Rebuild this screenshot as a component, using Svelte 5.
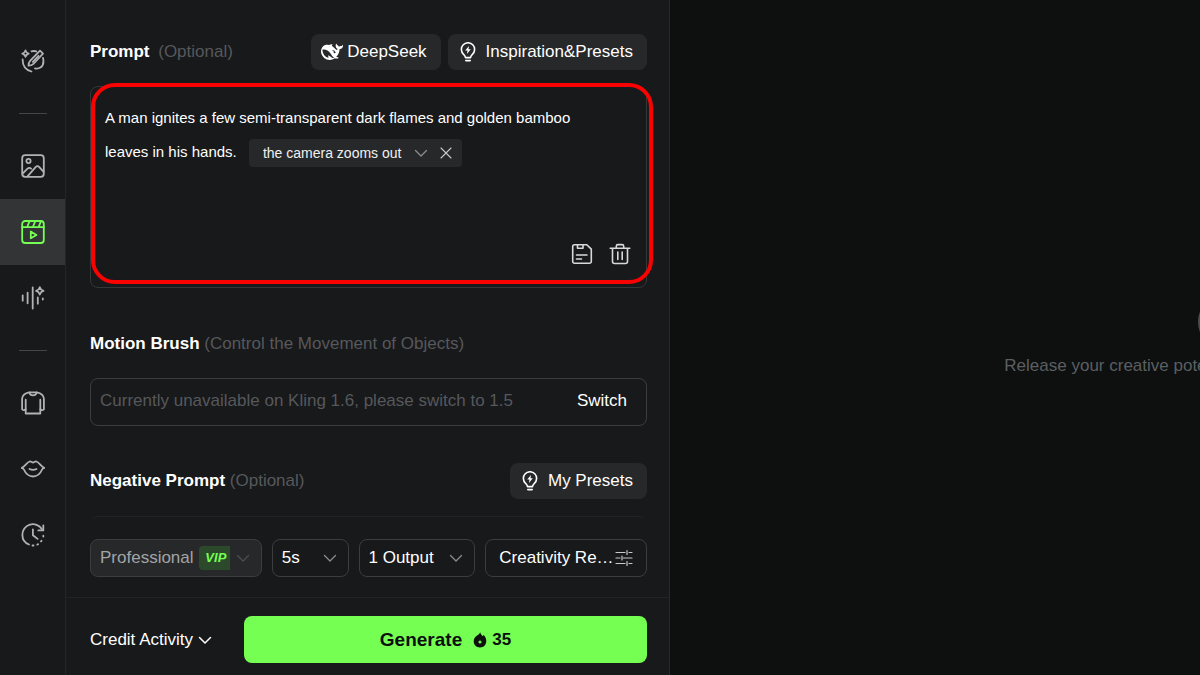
<script lang="ts">
	let prompt = $state(
		'A man ignites a few semi-transparent dark flames and golden bamboo leaves in his hands.'
	);
	let camera = $state('the camera zooms out');
	let showCamera = $state(true);
	let negative = $state('');
	let active = $state('video');

	const groups = [
		[{ id: 'design', label: 'Design' }],
		[
			{ id: 'image', label: 'Image' },
			{ id: 'video', label: 'Video' },
			{ id: 'audio', label: 'Audio' }
		],
		[
			{ id: 'tryon', label: 'Virtual try-on' },
			{ id: 'lips', label: 'Lip sync' },
			{ id: 'history', label: 'History' }
		]
	];

	function clearPrompt() {
		prompt = '';
		showCamera = false;
	}
</script>

{#snippet chevron()}
	<svg class="chevron" viewBox="0 0 14 14" width="14" height="14" aria-hidden="true">
		<path d="M1.500 4.500 7 10l5.500-5.500" />
	</svg>
{/snippet}

{#snippet bulb()}
	<svg class="icon" viewBox="0 0 20 20" width="20" height="20" aria-hidden="true">
		<path d="M7.400 15.600c0-1.400-.8-2.400-1.800-3.300a6.600 6.600 0 1 1 8.800 0c-1 .9-1.800 1.900-1.800 3.300z" />
		<path d="M7.800 18.600h4.400" />
		<path d="M11 3.900 7.200 8.400h2.300l-.6 3.600 3.900-4.700h-2.300z" fill="currentColor" stroke="none" />
	</svg>
{/snippet}

<div class="app">
	<nav class="rail" aria-label="Tools">
		{#each groups as group, g}
			{#if g > 0}<hr />{/if}
			{#each group as item}
				<button
					class="rail-item"
					class:active={active === item.id}
					aria-label={item.label}
					onclick={() => (active = item.id)}
				>
					<svg class="icon" viewBox="0 0 24 24" width="24" height="24" aria-hidden="true">
						{#if item.id === 'design'}
							<path d="M4.500 1.400c.5 2 1.200 2.700 3.200 3.200-2 .5-2.700 1.200-3.200 3.200-.5-2-1.200-2.700-3.200-3.200 2-.5 2.700-1.200 3.200-3.200z" />
							<path d="M1.600 10.500c0 6 3.300 10.600 8.900 12" />
							<path d="M10.500 2.300c1.700-.4 3.300-.4 4.800.1" />
							<path d="m19 1.600 3 3-9.600 10.200c-1.300 1.300-2.800 1.800-4.900 1.900 0-2.200.5-3.700 1.800-5.100z" />
							<path d="m11.800 12.800 5.700-6" />
							<path d="M22 8.800c.9 4-.1 8.200-2.600 9.800-1.600 1-3.400 1.200-5.400.8" />
						{:else if item.id === 'image'}
							<rect x="1.200" y="1.200" width="21.600" height="21.600" rx="3" />
							<circle cx="7.500" cy="7" r="2.100" />
							<path d="m1.600 19.700 4.900-5c1.200-1.200 2.500-1.200 3.600 0M6.500 22.300l8.100-9.200c1.200-1.300 2.500-1.300 3.700 0l4.300 4.700" />
						{:else if item.id === 'video'}
							<rect x="1.200" y="1" width="21.600" height="22" rx="3" />
							<path d="M1.200 7.200h21.600M8.600 1.200 6.200 7M14.300 1.200 11.900 7M20 1.200 17.600 7" />
							<path d="M9.800 11.500v6.800l5.700-3.400z" />
						{:else if item.id === 'audio'}
							<path d="M1.700 9.300v5.400M6.600 6.700v10.600M11.700 1.500v21M16.800 11.500v6.200M21.800 12.500v1" />
							<path d="M18.800 1.200c.6 2.200 1.500 3.100 3.700 3.700-2.200.6-3.100 1.500-3.700 3.700-.6-2.200-1.500-3.100-3.700-3.700 2.200-.6 3.100-1.500 3.700-3.700z" />
						{:else if item.id === 'tryon'}
							<path d="M8.100 1.300h7.800c3.900.7 6.700 2.800 7 6.500v10.500c-1 .9-2.500.9-3.600 0v4.200H4.700v-4.200c-1.100.9-2.600.9-3.600 0V7.800c.3-3.700 3.100-5.800 7-6.500z" />
							<path d="M4.700 18.300V8.700M19.300 18.300V8.700M8.200 1.500c.6 1.900 2 2.900 3.800 2.900s3.200-1 3.800-2.900" />
						{:else if item.id === 'lips'}
							<path d="M.9 10.800C4.300 9.300 5.900 5.200 8.700 4.500c1.400-.3 2.200 1 3.300 1s1.900-1.300 3.300-1c2.800.7 4.400 4.800 7.800 6.300" />
							<path d="M.9 10.800c1 .2 1.600.8 2 1.700 1.900 4.400 5.100 7 9.100 7s7.200-2.600 9.100-7c.4-.9 1-1.500 2-1.700" />
							<path d="M8.500 12c2.200 1 4.800 1 7 0" />
						{:else}
							<path d="M8 21.500C4 20 1.400 16.500 1.400 12A10.500 10.500 0 0 1 20.800 6.100" />
							<path d="M22.300 2.400v5h-5" />
							<path d="M11.900 6.500v5.700l4.700 3.700" />
							<path d="M11.500 22.500h1M16.300 21.600l.8-.4M20 18.400l.5-.7M22.300 13.500v-.8" />
						{/if}
					</svg>
				</button>
			{/each}
		{/each}
	</nav>

	<main class="panel">
		<div class="scroll">
			<section>
				<header class="head">
					<h2>Prompt <small class="wide">(Optional)</small></h2>
					<div class="actions">
						<button class="pill tight">
							<svg viewBox="0 3 24 18" width="22" height="18" aria-hidden="true">
								<path
									fill="currentColor"
									d="M23.748 4.482c-.254-.124-.364.113-.512.234-.051.039-.094.09-.137.136-.372.397-.806.657-1.373.626-.829-.046-1.537.214-2.163.848-.133-.782-.575-1.248-1.247-1.548-.352-.156-.708-.311-.955-.65-.172-.241-.219-.51-.305-.774-.055-.16-.11-.323-.293-.35-.2-.031-.278.136-.356.276-.313.572-.434 1.202-.422 1.840.027 1.436.633 2.580 1.838 3.393.137.093.172.187.129.323-.082.280-.180.552-.266.833-.055.179-.137.217-.329.140a5.526 5.526 0 0 1-1.736-1.180c-.857-.828-1.631-1.742-2.597-2.458a11.365 11.365 0 0 0-.689-.471c-.985-.957.130-1.743.388-1.836.270-.098.093-.432-.779-.428-.872.004-1.670.295-2.687.684a3.055 3.055 0 0 1-.465.137 9.597 9.597 0 0 0-2.883-.102c-1.885.210-3.390 1.102-4.497 2.623C.082 8.606-.231 10.684.152 12.850c.403 2.284 1.569 4.175 3.360 5.653 1.858 1.533 3.997 2.284 6.438 2.140 1.482-.085 3.133-.284 4.994-1.860.470.234.962.327 1.780.397.630.059 1.236-.030 1.705-.128.735-.156.684-.837.419-.961-2.155-1.004-1.682-.595-2.113-.926 1.096-1.296 2.746-2.642 3.392-7.003.050-.347.007-.565 0-.845-.004-.170.035-.237.230-.256a4.173 4.173 0 0 0 1.545-.475c1.396-.763 1.960-2.015 2.093-3.517.020-.230-.004-.467-.247-.588zM11.581 18c-2.089-1.642-3.102-2.183-3.520-2.160-.392.024-.321.471-.235.763.090.288.207.486.371.739.114.167.192.416-.113.603-.673.416-1.842-.140-1.897-.167-1.361-.802-2.500-1.860-3.301-3.307-.774-1.393-1.224-2.887-1.298-4.482-.020-.386.093-.522.477-.592a4.696 4.696 0 0 1 1.529-.039c2.132.312 3.946 1.265 5.468 2.774.868.860 1.525 1.887 2.202 2.891.720 1.066 1.494 2.082 2.480 2.914.348.292.625.514.891.677-.802.090-2.140.110-3.054-.614zm4.110-4.844c-.200.081-.399.151-.590.160a1.245 1.245 0 0 1-.798-.254c-.274-.230-.470-.358-.552-.758a1.730 1.730 0 0 1 .016-.588c.070-.327-.008-.537-.239-.727-.187-.156-.426-.199-.688-.199a.559.559 0 0 1-.254-.078.253.253 0 0 1-.114-.358c.028-.054.160-.186.192-.210.356-.202.767-.136 1.146.016.352.144.618.408 1.001.782.391.451.462.576.685.914.176.265.336.537.445.848.067.195-.019.354-.250.452z"
								/>
							</svg>
							DeepSeek
						</button>
						<button class="pill">{@render bulb()} Inspiration&amp;Presets</button>
					</div>
				</header>

				<div class="prompt-box">
					<div class="prompt-text">
						<span role="textbox" tabindex="0" aria-label="Prompt" contenteditable="true" bind:textContent={prompt}></span>
						{#if showCamera}
							<span class="chip">
								<select aria-label="Camera movement" bind:value={camera}>
									<option>the camera zooms out</option>
								</select>
								{@render chevron()}
								<button aria-label="Remove camera movement" onclick={() => (showCamera = false)}>
									<svg class="icon" viewBox="0 0 12 12" width="12" height="12" aria-hidden="true">
										<path d="m1 1 10 10M11 1 1 11" />
									</svg>
								</button>
							</span>
						{/if}
					</div>
					<div class="tools">
						<button aria-label="Save prompt">
							<svg class="icon" viewBox="0 0 22 22" width="22" height="22" aria-hidden="true">
								<path d="M3.500 1.700h12.300l4.500 4.400v12.400a1.800 1.800 0 0 1-1.800 1.800h-15a1.800 1.800 0 0 1-1.800-1.800v-15a1.800 1.800 0 0 1 1.800-1.800z" />
								<path d="M6.500 1.700v3.500H12V1.700M5.500 12H16M5.500 16h5" />
							</svg>
						</button>
						<button aria-label="Clear prompt" onclick={clearPrompt}>
							<svg class="icon" viewBox="0 0 22 22" width="22" height="22" aria-hidden="true">
								<path d="M1.200 5.300h19.600M7.300 5V3.200c0-1 .6-1.600 1.600-1.600h4.200c1 0 1.600.6 1.600 1.600V5M3.500 5.500v13a2 2 0 0 0 2 2h11a2 2 0 0 0 2-2v-13" />
								<path d="M8.800 9v7.500M13.200 9v7.500" />
							</svg>
						</button>
					</div>
					<div class="highlight"></div>
				</div>
			</section>

			<section class="motion">
				<h2>Motion Brush <small>(Control the Movement of Objects)</small></h2>
				<div class="notice">
					<span>Currently unavailable on Kling 1.6, please switch to 1.5</span>
					<button>Switch</button>
				</div>
			</section>

			<section class="negative">
				<header class="head">
					<h2><label for="negative">Negative Prompt</label> <small>(Optional)</small></h2>
					<button class="pill">{@render bulb()} My Presets</button>
				</header>
				<textarea id="negative" bind:value={negative}></textarea>
			</section>
		</div>

		<div class="params">
			<div class="field disabled">
				<select aria-label="Mode" disabled><option>Professional</option></select>
				<span class="vip">VIP</span>
				{@render chevron()}
			</div>
			<div class="field">
				<select aria-label="Duration">
					<option>5s</option>
					<option>10s</option>
				</select>
				{@render chevron()}
			</div>
			<div class="field">
				<select aria-label="Outputs">
					<option>1 Output</option>
					<option>2 Outputs</option>
				</select>
				{@render chevron()}
			</div>
			<button class="field creativity">
				<span>Creativity Relevance</span>
				<svg class="icon" viewBox="0 0 18 18" width="18" height="18" aria-hidden="true">
					<path d="M1 3.500h9M14 3.500h3M12 1.500v4M1 9h4M8.500 9H17M7 7v4M1 14.500h9M14 14.500h3M12 12.500v4" />
				</svg>
			</button>
		</div>

		<footer>
			<button class="credit">Credit Activity {@render chevron()}</button>
			<button class="generate">
				<b>Generate</b>
				<svg viewBox="0 0 14 16" width="14" height="16" aria-hidden="true">
					<path
						fill="currentColor"
						fill-rule="evenodd"
						d="M7.200.3c.4 2 1.500 2.700 2.400 3.900l1-1.100c1.700 1.500 2.700 3.700 2.700 5.900 0 3.700-2.700 6.500-6.300 6.500S.7 12.700.7 9.300c0-2.500 1.300-4.300 3-5.500C5.300 2.700 6.700 2 7.200.3zM7 7.500c-.3 1.500-.8 2-2.200 2.500 1.400.5 1.900 1 2.200 2.500.3-1.500.8-2 2.200-2.500C7.800 9.500 7.300 9 7 7.500z"
					/>
				</svg>
				<span>35</span>
			</button>
		</footer>
	</main>

	<aside class="stage">
		<div class="empty">
			<svg class="icon" viewBox="0 0 140 56" width="140" height="56" aria-hidden="true">
				<circle cx="27" cy="28" r="25" />
				<circle cx="113" cy="28" r="25" />
				<path d="M45 10c18 10 32 26 50 36M45 46c18-10 32-26 50-36" />
			</svg>
			<p>Release your creative potential. Experience the magic of Kling AI now.</p>
		</div>
	</aside>
</div>

<style>
	:global(body) {
		margin: 0;
		background: #0d100f;
	}

	.app {
		display: grid;
		grid-template-columns: 66px minmax(0, 604px) minmax(0, 1fr);
		grid-template-rows: minmax(0, 1fr);
		height: 100vh;
		overflow: hidden;
		color: #fff;
		font: 17px/20px 'Liberation Sans', Arial, sans-serif;
	}

	button,
	select,
	textarea {
		font: inherit;
		color: inherit;
		background: none;
		border: 0;
		padding: 0;
		margin: 0;
		box-sizing: border-box;
	}

	button {
		cursor: pointer;
	}

	select {
		appearance: none;
		outline: 0;
		opacity: 1;
	}

	svg {
		flex: none;
		display: block;
	}

	.icon,
	.chevron {
		fill: none;
		stroke: currentColor;
		stroke-width: 1.6;
		stroke-linecap: round;
		stroke-linejoin: round;
	}

	.chevron {
		stroke-width: 1.3;
	}

	.rail {
		display: flex;
		flex-direction: column;
		box-sizing: border-box;
		padding-top: 28px;
		background: #18191b;
		border-right: 1px solid #232527;
	}

	.rail hr {
		width: 28px;
		height: 1px;
		margin: 19px auto;
		border: 0;
		background: #434547;
	}

	.rail-item {
		display: flex;
		align-items: center;
		justify-content: center;
		height: 66px;
		color: #b0b2b4;
	}

	.rail-item .icon {
		stroke-width: 1.8;
	}

	.rail-item.active {
		background: #333436;
		color: #74ff52;
	}

	.panel {
		display: flex;
		flex-direction: column;
		box-sizing: border-box;
		background: #18191b;
		border-right: 1px solid #27292b;
	}

	.scroll {
		flex: 1;
		min-height: 0;
		overflow: hidden;
		padding: 34px 22px 0 24px;
	}

	h2 {
		margin: 0;
		font-size: 17px;
		font-weight: 700;
		line-height: 20px;
	}

	small {
		font-size: 17px;
		font-weight: 400;
		color: #56585b;
	}

	.wide {
		margin-left: 4px;
	}

	.head {
		display: flex;
		align-items: center;
		justify-content: space-between;
	}

	.actions {
		display: flex;
		gap: 7px;
	}

	.pill {
		display: flex;
		align-items: center;
		gap: 8px;
		height: 36px;
		padding: 0 14px 0 10px;
		border-radius: 8px;
		background: #27282a;
	}

	.pill.tight {
		gap: 4px;
	}

	.prompt-box {
		position: relative;
		display: flex;
		flex-direction: column;
		justify-content: space-between;
		box-sizing: border-box;
		min-height: 202px;
		margin-top: 16px;
		padding: 14px 14px 22px;
		border: 1px solid #343638;
		border-radius: 8px;
	}

	.prompt-text {
		font-size: 15px;
		line-height: 34px;
		padding-right: 20px;
	}

	.prompt-text [role='textbox'] {
		outline: 0;
	}

	.chip {
		display: inline-flex;
		align-items: center;
		gap: 12px;
		height: 28px;
		margin-left: 8px;
		padding: 0 10px 0 14px;
		border-radius: 4px;
		background: #27282a;
		font-size: 14px;
		vertical-align: middle;
		color: #f0f0f0;
	}

	.chip .chevron {
		color: #8a8c8e;
	}

	.chip .icon {
		stroke-width: 1.1;
		color: #c8c9ca;
	}

	.tools {
		display: flex;
		justify-content: flex-end;
		gap: 16px;
		padding-right: 1px;
		color: #d8d9da;
	}

	/* marker frame drawn over the prompt box */
	.highlight {
		position: absolute;
		inset: -4px -7px 3px 0;
		border: 4px solid #f90202;
		border-radius: 24px;
		pointer-events: none;
	}

	.motion {
		margin-top: 46px;
	}

	.notice {
		display: flex;
		align-items: center;
		justify-content: space-between;
		box-sizing: border-box;
		height: 48px;
		margin-top: 24px;
		padding: 0 19px 2px 9px;
		border: 1px solid #3b3d3f;
		border-radius: 8px;
	}

	.notice span {
		color: #56585b;
	}

	.negative {
		margin-top: 37px;
	}

	.negative textarea {
		display: block;
		width: 100%;
		height: 120px;
		margin-top: 17px;
		padding: 14px;
		border: 1px solid #212325;
		border-radius: 8px;
		resize: none;
	}

	.params {
		display: grid;
		grid-template-columns: 172fr 77fr 117fr 162fr;
		gap: 10px;
		margin-top: 20px;
		padding: 0 22px 20px 24px;
	}

	.field {
		display: flex;
		align-items: center;
		justify-content: space-between;
		box-sizing: border-box;
		min-width: 0;
		height: 38px;
		padding: 0 11px 0 9px;
		border: 1px solid #3b3d3f;
		border-radius: 8px;
	}

	.field .chevron {
		color: #8a8c8e;
	}

	.field.disabled {
		background: #27282a;
		color: #a2a4a6;
	}

	.field.disabled .chevron {
		color: #4b4d4f;
	}

	.vip {
		padding: 2px 4px 2px 6px;
		border-radius: 4px 0 0 4px;
		background: #2c4a2b;
		color: #74ff52;
		font-size: 13px;
		font-style: italic;
		font-weight: 700;
	}

	.creativity {
		padding: 0 13px;
	}

	.creativity span {
		overflow: hidden;
		text-overflow: ellipsis;
		white-space: nowrap;
	}

	.creativity .icon {
		stroke-width: 1.2;
		color: #c8c9ca;
	}

	footer {
		display: flex;
		gap: 32px;
		padding: 18px 22px 12px 24px;
		border-top: 1px solid #212325;
	}

	.credit {
		display: flex;
		align-items: center;
		gap: 5px;
		white-space: nowrap;
	}

	.credit .chevron {
		stroke-width: 1.5;
	}

	.generate {
		flex: 1;
		display: flex;
		align-items: center;
		justify-content: center;
		height: 47px;
		border-radius: 8px;
		background: #76ff53;
		color: #0c0f0c;
		font-weight: 700;
	}

	.generate b {
		margin-right: 11px;
		font-size: 19px;
	}

	.generate span {
		margin-left: 5px;
	}

	.stage {
		overflow: hidden;
		background: #0d100f;
	}

	.empty {
		display: flex;
		flex-direction: column;
		align-items: center;
		justify-content: center;
		box-sizing: border-box;
		min-width: 1196px;
		height: 100%;
		padding-bottom: 6px;
		color: #5b5f62;
	}

	.empty .icon {
		stroke-width: 4;
		color: #4a4d4f;
	}

	.empty p {
		margin: 6px 0 0;
		white-space: nowrap;
	}
</style>
